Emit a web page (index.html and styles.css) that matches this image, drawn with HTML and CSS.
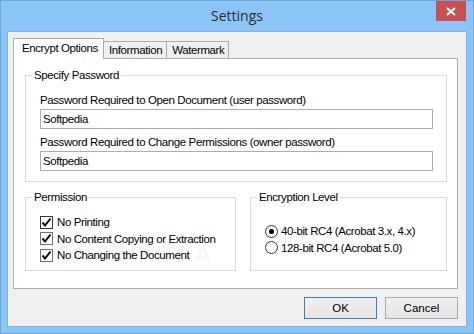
FILE: index.html
```html
<!DOCTYPE html>
<html lang="en">
<head>
  <meta charset="UTF-8">
  <title>Settings</title>
  <link rel="stylesheet" href="styles.css">
</head>
<body>
  <div class="window">
    <div class="titlebar">
      <span class="title">Settings</span>
      <span class="close">
        <svg width="10" height="9" viewBox="0 0 10 9"><path d="M1 1 L9 8 M9 1 L1 8" stroke="#fff" stroke-width="2"/></svg>
      </span>
    </div>
    <div class="client">
      <div class="tabs">
        <div class="tab active">Encrypt Options</div>
        <div class="tab">Information</div>
        <div class="tab">Watermark</div>
      </div>
      <div class="panel">
        <fieldset class="group passwords">
          <legend>Specify Password</legend>
          <label class="field-label">Password Required to Open Document (user password)</label>
          <input class="text-input" type="text" value="Softpedia">
          <label class="field-label">Password Required to Change Permissions (owner password)</label>
          <input class="text-input" type="text" value="Softpedia">
        </fieldset>
        <div class="group-row">
          <fieldset class="group permission">
            <legend>Permission</legend>
            <div class="watermark">SOFTPEDIA</div>
            <div class="check-row"><span class="checkbox focused"><svg width="11" height="11" viewBox="0 0 11 11"><path d="M1.5 5.5 L4 8.5 L9.5 1.5" fill="none" stroke="#000" stroke-width="2"/></svg></span>No Printing</div>
            <div class="check-row"><span class="checkbox"><svg width="11" height="11" viewBox="0 0 11 11"><path d="M1.5 5.5 L4 8.5 L9.5 1.5" fill="none" stroke="#000" stroke-width="2"/></svg></span>No Content Copying or Extraction</div>
            <div class="check-row"><span class="checkbox"><svg width="11" height="11" viewBox="0 0 11 11"><path d="M1.5 5.5 L4 8.5 L9.5 1.5" fill="none" stroke="#000" stroke-width="2"/></svg></span>No Changing the Document</div>
          </fieldset>
          <fieldset class="group encryption">
            <legend>Encryption Level</legend>
            <div class="check-row"><span class="radio checked"></span>40-bit RC4 (Acrobat 3.x, 4.x)</div>
            <div class="check-row"><span class="radio"></span>128-bit RC4 (Acrobat 5.0)</div>
          </fieldset>
        </div>
      </div>
      <div class="buttons">
        <button class="btn default">OK</button>
        <button class="btn">Cancel</button>
      </div>
    </div>
  </div>
</body>
</html>
```
FILE: styles.css
```css
/* window frame */
body {
  margin: 0;
  font-family: 'Liberation Sans', Arial, sans-serif;
  font-size: 11.5px;
  letter-spacing: -0.4px;
  color: #000;
}
.window {
  width: 474px;
  height: 334px;
  box-sizing: border-box;
  background-color: #8bc5f8;
  border: 1px solid #6fa6da;
  display: flex;
  flex-direction: column;
}
.titlebar {
  height: 30px;
  display: flex;
  justify-content: center;
  align-items: center;
  position: relative;
}
.title {
  font-family: 'Open Sans', sans-serif;
  font-size: 14px;
  letter-spacing: 0;
  color: #2b2b2b;
  margin-top: -1px;
}
.close {
  position: absolute;
  right: 7px;
  top: 0;
  width: 30px;
  height: 20px;
  background-color: #c75050;
  display: flex;
  justify-content: center;
  align-items: center;
}
.client {
  flex: 1;
  margin: 0 6px 6px 6px;
  background-color: #f0f0f0;
  border: 1px solid #7fb2e0;
  padding: 6px 8px 0 5px;
  display: flex;
  flex-direction: column;
}
/* tabs */
.tabs {
  display: flex;
  align-items: flex-end;
  height: 20px;
  position: relative;
  z-index: 1;
}
.tab {
  height: 17px;
  line-height: 17px;
  padding: 0 4px 0 5px;
  border: 1px solid #acacac;
  border-bottom: none;
  background-color: #f0f0f0;
  box-sizing: border-box;
  margin-left: -1px;
}
.tab.active {
  width: 91px;
  height: 21px;
  line-height: 19px;
  padding: 0 0 0 8px;
  background-color: #fff;
  margin-left: 0;
  margin-bottom: -1px;
}
.panel {
  height: 231px;
  box-sizing: border-box;
  background-color: #fff;
  border: 1px solid #acacac;
  padding: 8px 10px 0 11px;
}
/* group boxes */
.group {
  margin: 0;
  min-width: 0;
  border: 1px solid #dcdcdc;
  display: flex;
  flex-direction: column;
}
.group legend {
  padding: 0 2px;
  margin-left: -8px;
  line-height: 16px;
}
.passwords {
  padding: 9px 13px 5px 14px;
}
.field-label {
  line-height: 16px;
  margin-bottom: 1px;
}
.text-input {
  height: 20px;
  box-sizing: border-box;
  border: 1px solid #abadb3;
  font: inherit;
  letter-spacing: inherit;
  padding: 0 2px;
  margin: 0 0 5px 0;
}
.group-row {
  display: flex;
  gap: 14px;
  margin-top: 7px;
}
.permission {
  flex: 0 0 211px;
  box-sizing: border-box;
  padding: 9px 10px 6px 14px;
  position: relative;
}
.encryption {
  flex: 1;
  padding: 18px 10px 14px 14px;
}
.check-row {
  display: flex;
  align-items: center;
  height: 16.5px;
  white-space: nowrap;
  position: relative;
}
.checkbox {
  width: 13px;
  height: 13px;
  box-sizing: border-box;
  border: 1px solid #707070;
  background-color: #fff;
  margin-right: 4px;
  display: flex;
  justify-content: center;
  align-items: center;
}
.checkbox.focused {
  border-color: #333;
}
.radio {
  width: 13px;
  height: 13px;
  box-sizing: border-box;
  border: 1px solid #333;
  border-radius: 50%;
  background-color: #fff;
  margin-right: 3px;
  display: flex;
  justify-content: center;
  align-items: center;
}
.radio.checked::after {
  content: "";
  width: 5px;
  height: 5px;
  border-radius: 50%;
  background-color: #000;
}
.watermark {
  position: absolute;
  left: 30px;
  bottom: 3px;
  font-family: 'DejaVu Sans', sans-serif;
  font-size: 22px;
  font-weight: bold;
  letter-spacing: 2px;
  color: rgba(0, 0, 0, 0.04);
}
/* dialog buttons */
.buttons {
  display: flex;
  justify-content: flex-end;
  gap: 8px;
  padding: 8px 0 0 0;
}
.btn {
  width: 73px;
  height: 22px;
  font: inherit;
  letter-spacing: 0;
  background: linear-gradient(#f0f0f0, #e5e5e5);
  border: 1px solid #acacac;
  padding: 0;
}
.btn.default {
  border-color: #3c7fb1;
}
```
